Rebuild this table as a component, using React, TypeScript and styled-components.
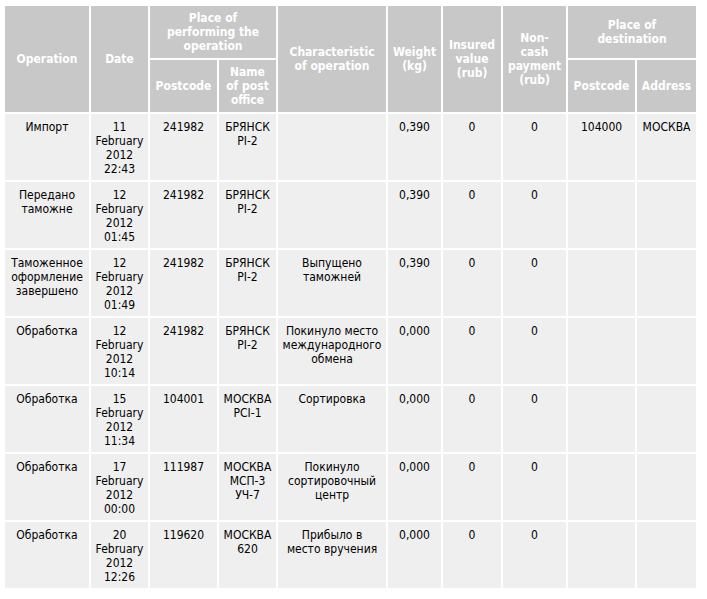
import React from "react";
import styled, { createGlobalStyle } from "styled-components";

const GlobalStyle = createGlobalStyle`
  html, body {
    margin: 0;
    padding: 0;
    background: #ffffff;
  }
  body {
    font-family: "DejaVu Sans Condensed", Tahoma, "DejaVu Sans", sans-serif;
    font-size: 12px;
  }
`;

const Table = styled.table`
  margin: 4px 0 0 3px;
  width: 695px;
  table-layout: fixed;
  border-collapse: separate;
  border-spacing: 2px;
  font-size: 12px;
  line-height: 14px;
`;

const Head = styled.th`
  background: #c8c8c8;
  color: #ffffff;
  font-weight: bold;
  text-align: center;
  vertical-align: middle;
  padding: 5px 3px;
`;

const Cell = styled.td`
  background: #efefef;
  color: #000000;
  text-align: center;
  vertical-align: top;
  padding: 6px 3px 4px;
  height: 56px;
`;

type Row = {
  op: string[];
  date: [string, string];
  postcode: string;
  office: string[];
  info: string[];
  weight: string;
  insured: string;
  cash: string;
  destCode?: string;
  destAddr?: string;
};

const rows: Row[] = [
  { op: ["Импорт"], date: ["11", "22:43"], postcode: "241982", office: ["БРЯНСК", "PI-2"], info: [], weight: "0,390", insured: "0", cash: "0", destCode: "104000", destAddr: "МОСКВА" },
  { op: ["Передано", "таможне"], date: ["12", "01:45"], postcode: "241982", office: ["БРЯНСК", "PI-2"], info: [], weight: "0,390", insured: "0", cash: "0" },
  { op: ["Таможенное", "оформление", "завершено"], date: ["12", "01:49"], postcode: "241982", office: ["БРЯНСК", "PI-2"], info: ["Выпущено", "таможней"], weight: "0,390", insured: "0", cash: "0" },
  { op: ["Обработка"], date: ["12", "10:14"], postcode: "241982", office: ["БРЯНСК", "PI-2"], info: ["Покинуло место", "международного", "обмена"], weight: "0,000", insured: "0", cash: "0" },
  { op: ["Обработка"], date: ["15", "11:34"], postcode: "104001", office: ["МОСКВА", "PCI-1"], info: ["Сортировка"], weight: "0,000", insured: "0", cash: "0" },
  { op: ["Обработка"], date: ["17", "00:00"], postcode: "111987", office: ["МОСКВА", "МСП-3", "УЧ-7"], info: ["Покинуло", "сортировочный", "центр"], weight: "0,000", insured: "0", cash: "0" },
  { op: ["Обработка"], date: ["20", "12:26"], postcode: "119620", office: ["МОСКВА", "620"], info: ["Прибыло в", "место вручения"], weight: "0,000", insured: "0", cash: "0" },
];

const widths = [84, 57, 67, 57, 108, 53, 58, 63, 67, 59];

const Lines = ({ items }: { items: string[] }) => (
  <>
    {items.map((t, i) => (
      <React.Fragment key={i}>
        {i > 0 && <br />}
        {t}
      </React.Fragment>
    ))}
  </>
);

export default function App() {
  return (
    <>
      <GlobalStyle />
      <Table>
        <colgroup>
          {widths.map((w, i) => (
            <col key={i} style={{ width: w }} />
          ))}
        </colgroup>
        <thead>
          <tr>
            <Head rowSpan={2}>Operation</Head>
            <Head rowSpan={2}>Date</Head>
            <Head colSpan={2}>
              <Lines items={["Place of", "performing the", "operation"]} />
            </Head>
            <Head rowSpan={2}>
              <Lines items={["Characteristic", "of operation"]} />
            </Head>
            <Head rowSpan={2}>
              <Lines items={["Weight", "(kg)"]} />
            </Head>
            <Head rowSpan={2}>
              <Lines items={["Insured", "value", "(rub)"]} />
            </Head>
            <Head rowSpan={2}>
              <Lines items={["Non-", "cash", "payment", "(rub)"]} />
            </Head>
            <Head colSpan={2}>
              <Lines items={["Place of", "destination"]} />
            </Head>
          </tr>
          <tr>
            <Head>Postcode</Head>
            <Head>
              <Lines items={["Name", "of post", "office"]} />
            </Head>
            <Head>Postcode</Head>
            <Head>Address</Head>
          </tr>
        </thead>
        <tbody>
          {rows.map((r, i) => (
            <tr key={i}>
              <Cell>
                <Lines items={r.op} />
              </Cell>
              <Cell>
                <Lines items={[r.date[0], "February", "2012", r.date[1]]} />
              </Cell>
              <Cell>{r.postcode}</Cell>
              <Cell>
                <Lines items={r.office} />
              </Cell>
              <Cell>
                <Lines items={r.info} />
              </Cell>
              <Cell>{r.weight}</Cell>
              <Cell>{r.insured}</Cell>
              <Cell>{r.cash}</Cell>
              <Cell>{r.destCode ?? ""}</Cell>
              <Cell>{r.destAddr ?? ""}</Cell>
            </tr>
          ))}
        </tbody>
      </Table>
    </>
  );
}
